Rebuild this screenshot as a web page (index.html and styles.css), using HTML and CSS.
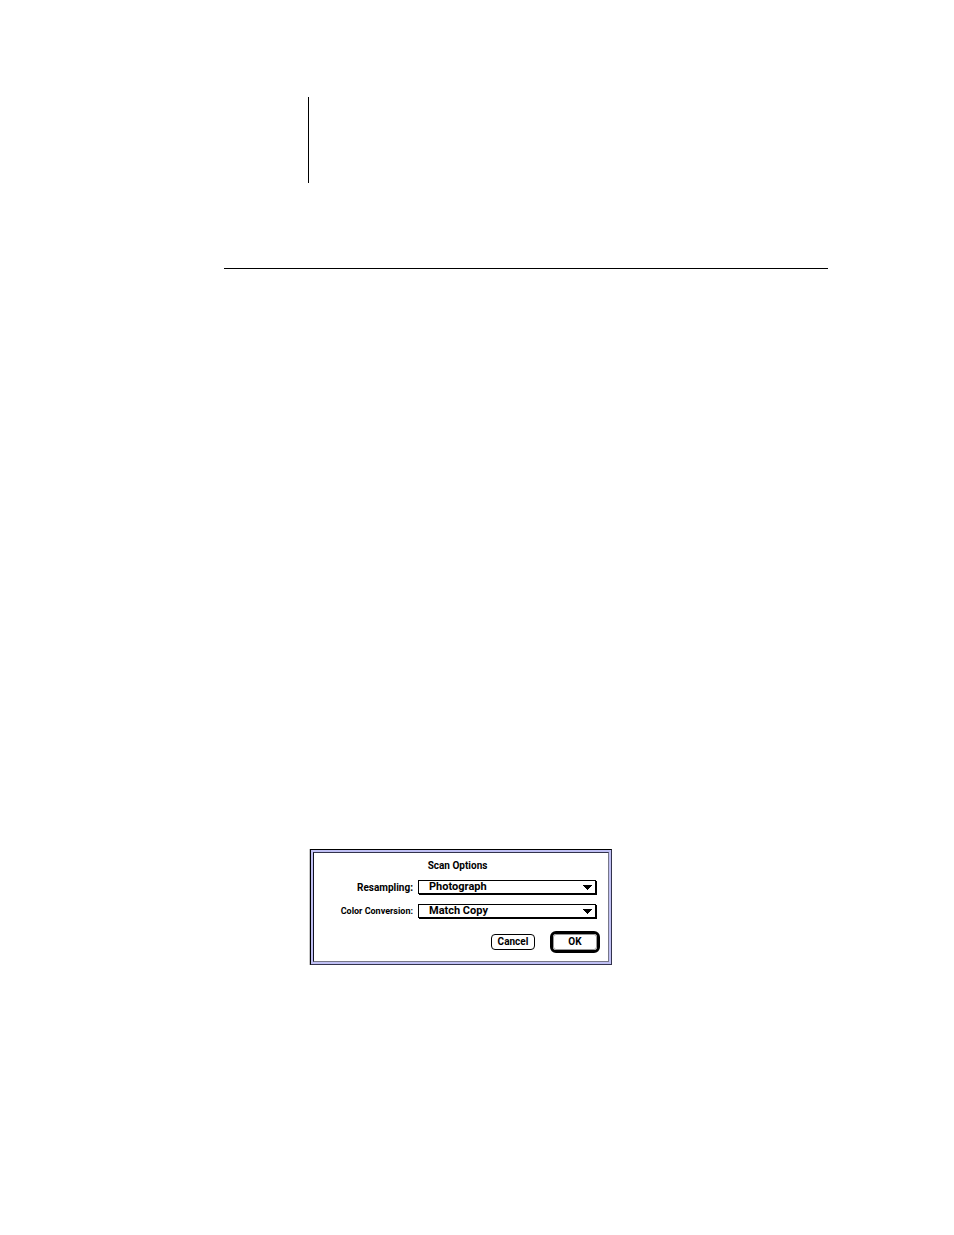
FILE: index.html
```html
<!DOCTYPE html>
<html lang="en">
<head>
    <meta charset="UTF-8">
    <meta name="viewport" content="width=device-width, initial-scale=1.0">
    <title>Scan Options</title>
    <link rel="stylesheet" href="styles.css">
</head>
<body>
    <main class="page">
        <div class="header-line"></div>
        <hr class="header-rule">
        <div class="dialog">
            <form class="dialog-body">
                <h1 class="dialog-title">Scan Options</h1>
                <div class="form-row">
                    <label class="form-label" for="resampling">Resampling:</label>
                    <div class="popup">
                        <select class="popup-select" id="resampling">
                            <option>Photograph</option>
                        </select>
                        <svg class="popup-arrow" viewBox="0 0 9 5"><path d="M0 0h9v1h-1v1h-1v1h-1v1h-1v1h-1v-1h-1v-1h-1v-1h-1v-1h-1z"/></svg>
                    </div>
                </div>
                <div class="form-row">
                    <label class="form-label form-label-small" for="conversion">Color Conversion:</label>
                    <div class="popup">
                        <select class="popup-select" id="conversion">
                            <option>Match Copy</option>
                        </select>
                        <svg class="popup-arrow" viewBox="0 0 9 5"><path d="M0 0h9v1h-1v1h-1v1h-1v1h-1v1h-1v-1h-1v-1h-1v-1h-1v-1h-1z"/></svg>
                    </div>
                </div>
                <div class="dialog-actions">
                    <button type="button" class="button">Cancel</button>
                    <div class="default-ring">
                        <button type="button" class="button">OK</button>
                    </div>
                </div>
            </form>
        </div>
    </main>
</body>
</html>
```
FILE: styles.css
```css
* {
    box-sizing: border-box;
}
body {
    margin: 0;
    background: white;
    color: black;
    font-family: Roboto, "Liberation Sans", sans-serif;
    font-size: 11px;
    font-weight: bold;
}
.page {
    padding: 97px 126px 40px 224px;
}
.header-line {
    height: 86px;
    margin-left: 84px;
    border-left: 1px solid black;
}
.header-rule {
    margin: 85px 0 0;
    border: 0;
    border-top: 1px solid black;
}

/* Dialog window */
.dialog {
    max-width: 302px;
    margin: 580px 0 0 86px;
    padding: 2px;
    background: #c0c0f4;
    border: 1px solid black;
    border-color: black #33334d #33334d black;
    box-shadow: -1px 0 #c8c8c8;
}
.dialog-body {
    padding: 6px 11px 8px 4px;
    background: white;
    border: 1px solid;
    border-color: #33334d #777788 #777788 #111122;
}
.dialog-title {
    margin: 0 0 7px;
    font-size: 10px;
    line-height: 14px;
    text-align: center;
}
.form-row {
    display: flex;
    align-items: center;
    gap: 5px;
    margin-bottom: 9px;
}
.form-label {
    flex: 1;
    font-size: 10px;
    line-height: 15px;
    text-align: right;
    white-space: nowrap;
}
.form-label-small {
    font-size: 9px;
}

/* Popup menus */
.popup {
    display: grid;
    align-items: center;
    width: 179px;
    padding: 0 1px 1px 0;
}
.popup-select {
    grid-area: 1 / 1;
    appearance: none;
    width: 100%;
    height: 14px;
    padding: 0 10px;
    background: white;
    border: 1px solid black;
    border-radius: 0;
    box-shadow: 1px 1px black;
    color: black;
    font: inherit;
    line-height: 12px;
}
.popup-arrow {
    grid-area: 1 / 1;
    justify-self: end;
    width: 9px;
    height: 5px;
    margin-right: 4px;
    pointer-events: none;
}

/* Buttons */
.dialog-actions {
    display: flex;
    justify-content: flex-end;
    align-items: center;
    gap: 15px;
    margin: 12px -3px 0 0;
}
.button {
    width: 44px;
    height: 16px;
    padding: 0;
    background: white;
    border: 1px solid black;
    border-radius: 4px;
    color: black;
    font: inherit;
    font-size: 10px;
    line-height: 14px;
}
.default-ring {
    display: flex;
    border: 3px solid black;
    border-radius: 6px;
}
.default-ring .button {
    border-color: #999;
    border-radius: 3px;
}
```
